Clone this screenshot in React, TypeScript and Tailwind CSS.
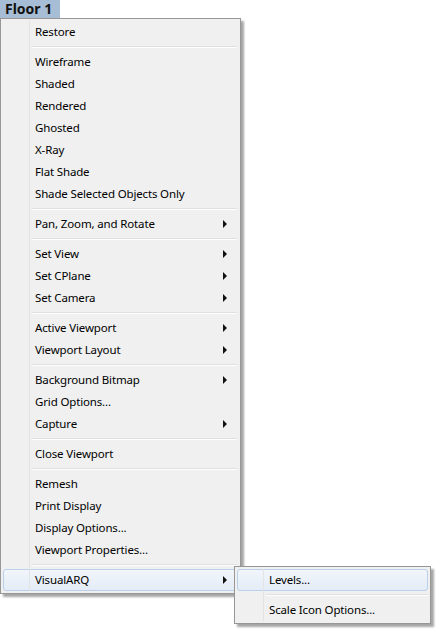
type Entry = { label?: string; sub?: boolean; hot?: boolean; sep?: boolean };

const MAIN: Entry[] = [
  { label: 'Restore' },
  { sep: true },
  { label: 'Wireframe' },
  { label: 'Shaded' },
  { label: 'Rendered' },
  { label: 'Ghosted' },
  { label: 'X-Ray' },
  { label: 'Flat Shade' },
  { label: 'Shade Selected Objects Only' },
  { sep: true },
  { label: 'Pan, Zoom, and Rotate', sub: true },
  { sep: true },
  { label: 'Set View', sub: true },
  { label: 'Set CPlane', sub: true },
  { label: 'Set Camera', sub: true },
  { sep: true },
  { label: 'Active Viewport', sub: true },
  { label: 'Viewport Layout', sub: true },
  { sep: true },
  { label: 'Background Bitmap', sub: true },
  { label: 'Grid Options...' },
  { label: 'Capture', sub: true },
  { sep: true },
  { label: 'Close Viewport' },
  { sep: true },
  { label: 'Remesh' },
  { label: 'Print Display' },
  { label: 'Display Options...' },
  { label: 'Viewport Properties...' },
  { sep: true },
  { label: 'VisualARQ', sub: true, hot: true },
];

const SUBMENU: Entry[] = [
  { label: 'Levels...', hot: true },
  { sep: true },
  { label: 'Scale Icon Options...' },
];

function Menu({ items, className }: { items: Entry[]; className: string }) {
  return (
    <div
      className={`border border-[#979797] bg-[#f0f0f0] p-[2px] shadow-[3px_3px_2px_rgba(0,0,0,0.35)] ${className}`}
    >
      <div className="relative">
        {/* icon gutter line */}
        <div className="absolute left-[26px] top-0 bottom-0 z-10 w-[2px] border-l border-[#e2e3e3] border-r-white pointer-events-none" />
        {items.map((it, i) =>
          it.sep ? (
            <div key={i} className="h-[8px] flex items-center pl-[29px] pr-[1px]">
              <div className="h-[2px] w-full border-t border-[#e0e0e0] border-b border-b-white" />
            </div>
          ) : (
            <div
              key={i}
              className={`h-[22px] flex items-center justify-between pl-[32px] pr-[10px] rounded-[3px] border ${
                it.hot
                  ? 'border-[#b8d0ea] bg-gradient-to-b from-[#f2f6fb] to-[#e3ecf7]'
                  : 'border-transparent'
              }`}
            >
              <span className="text-[11.5px] tracking-[-0.15px] text-black leading-none -ml-px">
                {it.label}
              </span>
              {it.sub && (
                <span className="w-0 h-0 border-y-[4px] border-y-transparent border-l-[4px] border-l-[#111]" />
              )}
            </div>
          )
        )}
      </div>
    </div>
  );
}

export default function App() {
  return (
    <div className="relative w-[437px] h-[631px] bg-white overflow-hidden font-['Noto_Sans',sans-serif]">
      <div className="w-[60px] h-[18px] bg-[#a7bcd5] pl-[5px] text-[14px] font-bold leading-[18px] text-[#111]">
        Floor 1
      </div>
      <Menu items={MAIN} className="w-[241px]" />
      <Menu items={SUBMENU} className="absolute left-[234px] top-[566px] w-[197px]" />
    </div>
  );
}
